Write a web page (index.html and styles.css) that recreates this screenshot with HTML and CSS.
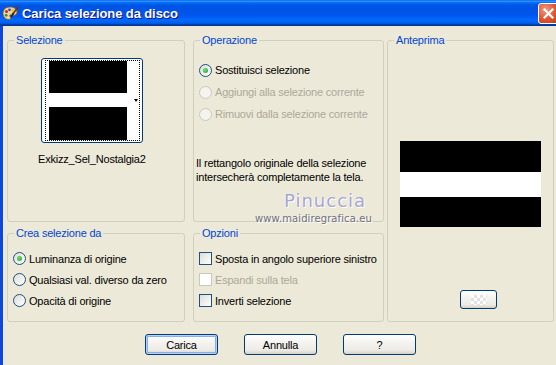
FILE: index.html
```html
<!DOCTYPE html>
<html lang="it">
<head>
  <meta charset="UTF-8" />
  <title>Carica selezione da disco</title>
  <link rel="stylesheet" href="styles.css">
</head>
<body>
  <div class="window">
    <div class="titlebar">
      <svg class="app-icon" width="17" height="17" viewBox="0 0 17 17">
        <path d="M8 2 C3 2 1 5 1 8.5 C1 12 3.5 14.5 7 14.5 C9 14.5 9 12.5 8 11.5 C7.2 10.6 8 9.5 9.5 10 C12 11 15 10 15 7 C15 4 12 2 8 2 Z" fill="#f0d49a" stroke="#7a5a2a" stroke-width="0.8"/>
        <circle cx="4.5" cy="6.5" r="1.5" fill="#e02020"/>
        <circle cx="7.5" cy="4.8" r="1.4" fill="#2050e0"/>
        <circle cx="4.2" cy="10.3" r="1.4" fill="#20a030"/>
        <circle cx="11" cy="5.5" r="1.3" fill="#f0c000"/>
        <path d="M16 2 L11 9" stroke="#6a3a10" stroke-width="1.6" stroke-linecap="round"/>
        <path d="M11.2 8.6 L9.6 11.4" stroke="#303030" stroke-width="2" stroke-linecap="round"/>
      </svg>
      <span class="title">Carica selezione da disco</span>
      <span class="close">
        <svg width="13" height="13" viewBox="0 0 13 13">
          <path d="M2.5 2.5 L10.5 10.5 M10.5 2.5 L2.5 10.5" stroke="#fff" stroke-width="2.2" stroke-linecap="square"/>
        </svg>
      </span>
    </div>

    <div class="frame">
      <div class="groups">
        <div class="col col-left">
          <fieldset class="group group-top">
            <legend>Selezione</legend>
            <div class="thumb">
              <div class="thumb-focus">
                <div class="thumb-img">
                  <div class="band-black"></div>
                  <div class="band-white"></div>
                  <div class="band-black"></div>
                </div>
                <div class="thumb-arrow"><span class="tri"></span></div>
              </div>
            </div>
            <div class="thumb-name">Exkizz_Sel_Nostalgia2</div>
          </fieldset>

          <fieldset class="group group-bottom">
            <legend>Crea selezione da</legend>
            <div class="options">
              <label class="opt"><span class="radio checked"></span>Luminanza di origine</label>
              <label class="opt"><span class="radio"></span>Qualsiasi val. diverso da zero</label>
              <label class="opt"><span class="radio"></span>Opacità di origine</label>
            </div>
          </fieldset>
        </div>

        <div class="col col-mid">
          <fieldset class="group group-top">
            <legend>Operazione</legend>
            <div class="options options-op">
              <label class="opt"><span class="radio checked"></span>Sostituisci selezione</label>
              <label class="opt disabled"><span class="radio"></span>Aggiungi alla selezione corrente</label>
              <label class="opt disabled"><span class="radio"></span>Rimuovi dalla selezione corrente</label>
            </div>
            <p class="note">Il rettangolo originale della selezione intersecherà completamente la tela.</p>
          </fieldset>

          <fieldset class="group group-bottom">
            <legend>Opzioni</legend>
            <div class="options">
              <label class="opt"><span class="check"></span>Sposta in angolo superiore sinistro</label>
              <label class="opt disabled"><span class="check"></span>Espandi sulla tela</label>
              <label class="opt"><span class="check"></span>Inverti selezione</label>
            </div>
          </fieldset>
        </div>

        <div class="col col-right">
          <fieldset class="group group-full">
            <legend>Anteprima</legend>
            <div class="preview">
              <div class="band-black"></div>
              <div class="band-white"></div>
              <div class="band-black"></div>
            </div>
            <button class="btn btn-small"><span class="checker"></span></button>
          </fieldset>
        </div>
      </div>

      <div class="actions">
        <button class="btn btn-default">Carica</button>
        <button class="btn">Annulla</button>
        <button class="btn">?</button>
      </div>

      <div class="watermark">
        <div class="wm-name">Pinuccia</div>
        <div class="wm-site">www.maidiregrafica.eu</div>
      </div>
    </div>
  </div>
</body>
</html>
```

FILE: styles.css
```css
body {
  margin: 0;
  overflow: hidden;
  font-family: 'Liberation Sans', Arial, sans-serif;
  font-size: 11px;
  letter-spacing: -0.2px;
  color: #000;
}

.window {
  width: 562px;
  height: 365px;
  display: flex;
  flex-direction: column;
}

/* barra del titolo */
.titlebar {
  height: 26px;
  flex: none;
  display: flex;
  align-items: center;
  padding-left: 2px;
  background: linear-gradient(to bottom, #0058ee 0%, #3593ff 4%, #288eff 6%, #127dff 8%, #036ffc 10%, #0262ee 14%, #0057e5 20%, #0054e3 24%, #0055eb 56%, #005bf5 66%, #026afe 76%, #0062ef 86%, #0052d6 92%, #0040ab 94%, #003092 100%);
}

.app-icon {
  margin-right: 3px;
}

.title {
  flex: 1;
  color: #fff;
  font-weight: bold;
  font-size: 13px;
  letter-spacing: -0.1px;
  text-shadow: 1px 1px #0f1089;
  padding-top: 1px;
}

.close {
  width: 21px;
  height: 21px;
  margin-right: 3px;
  box-sizing: border-box;
  border: 1px solid #fff;
  border-radius: 3px;
  background: radial-gradient(circle at 35% 30%, #f19a7f, #e0532f 55%, #c33a16);
  display: flex;
  align-items: center;
  justify-content: center;
}

/* area client */
.frame {
  flex: 1;
  position: relative;
  background-color: #ece9d8;
  border-left: 3px solid #0b49de;
  padding: 8px 0 0 4px;
}

.groups {
  display: flex;
}

.col {
  display: flex;
  flex-direction: column;
  gap: 5px;
}

.col-left { width: 178px; }
.col-mid { width: 191px; margin-left: 8px; }
.col-right { width: 167px; margin-left: 3px; }

.group {
  margin: 0;
  padding: 0;
  min-width: 0;
  box-sizing: border-box;
  border: 1px solid #d0d0bf;
  border-radius: 3px;
}

.group legend {
  margin-left: 6px;
  padding: 0 2px;
  line-height: 13px;
  color: #0046d5;
}

.group-top { height: 188px; }
.group-bottom { height: 95px; }
.group-full { height: 288px; }

/* miniatura selezione */
.thumb {
  width: 102px;
  height: 85px;
  box-sizing: border-box;
  margin: 11px 0 0 33px;
  padding: 1px 2px 1px 3px;
  border: 1px solid #003c74;
  border-radius: 3px;
  background-color: #fff;
}

.thumb-focus {
  display: flex;
  height: 81px;
  box-sizing: border-box;
  border: 1px dotted #000;
  padding-left: 3px;
}

.thumb-img {
  width: 78px;
  display: flex;
  flex-direction: column;
}

.thumb-img .band-black:first-child { height: 32px; }
.thumb-img .band-white { height: 14px; }
.thumb-img .band-black:last-child { flex: 1; }

.band-black { background-color: #000; }
.band-white { background-color: #fff; }

.thumb-arrow {
  flex: 1;
  display: flex;
  align-items: center;
  justify-content: flex-end;
  padding-right: 1px;
}

.tri {
  width: 0;
  height: 0;
  border-left: 2px solid transparent;
  border-right: 2px solid transparent;
  border-top: 3px solid #000;
}

.thumb-name {
  margin: 10px 0 0 30px;
  line-height: 13px;
}

/* opzioni */
.options {
  padding-top: 8px;
}

.options-op {
  padding-top: 12px;
}

.opt {
  display: flex;
  align-items: center;
  height: 21px;
  padding-left: 5px;
}

.options-op .opt {
  height: 22px;
}

.opt.disabled {
  color: #aca899;
}

.radio {
  width: 13px;
  height: 13px;
  box-sizing: border-box;
  margin-right: 3px;
  border: 1px solid #1c5180;
  border-radius: 50%;
  background: linear-gradient(135deg, #dcdcd7, #fff);
  display: flex;
  align-items: center;
  justify-content: center;
}

.radio.checked::after {
  content: "";
  width: 5px;
  height: 5px;
  border-radius: 50%;
  background: radial-gradient(circle at 40% 40%, #6fe06f, #21a121);
}

.disabled .radio {
  border-color: #cac8bb;
  background: #f4f3ee;
}

.check {
  width: 13px;
  height: 13px;
  box-sizing: border-box;
  margin-right: 3px;
  border: 1px solid #1c5180;
  background: linear-gradient(135deg, #dcdcd7, #fff);
}

.disabled .check {
  border-color: #cac8bb;
  background: #fff;
}

.note {
  margin: 31px 0 0 2px;
  line-height: 14px;
  width: 180px;
}

/* anteprima */
.preview {
  width: 141px;
  height: 86px;
  margin: 94px 0 0 12px;
  display: flex;
  flex-direction: column;
}

.preview .band-black:first-child { height: 31px; }
.preview .band-white { height: 25px; }
.preview .band-black:last-child { flex: 1; }

/* pulsanti */
.btn {
  font-family: inherit;
  font-size: 11px;
  letter-spacing: -0.2px;
  width: 73px;
  height: 21px;
  padding: 0;
  border: 1px solid #003c74;
  border-radius: 3px;
  background: linear-gradient(to bottom, #fff 0%, #f4f3ee 40%, #ecebe6 80%, #d6d0c5 100%);
  color: #000;
}

.btn-default {
  box-shadow: inset 0 0 0 1px #b9d1fa, inset 0 0 0 2px #88adea;
}

.btn-small {
  width: 37px;
  height: 19px;
  margin: 63px 0 0 72px;
  display: flex;
  align-items: center;
  justify-content: center;
}

.checker {
  width: 16px;
  height: 10px;
  background-color: #fff;
  background-image: linear-gradient(45deg, #e2e2e2 25%, transparent 25%, transparent 75%, #e2e2e2 75%), linear-gradient(45deg, #e2e2e2 25%, transparent 25%, transparent 75%, #e2e2e2 75%);
  background-size: 6px 6px;
  background-position: 0 0, 3px 3px;
}

.actions {
  display: flex;
  gap: 26px;
  margin: 12px 0 0 138px;
}

/* filigrana */
.watermark {
  position: absolute;
  left: 0;
  top: 0;
  pointer-events: none;
}

.wm-name {
  position: absolute;
  left: 281px;
  top: 166px;
  font-family: 'DejaVu Sans', sans-serif;
  font-size: 18px;
  line-height: 18px;
  letter-spacing: 1px;
  color: #a6a6d0;
  text-shadow: 1px 1px #fff, -1px 0 #f6f4ec;
  white-space: nowrap;
}

.wm-site {
  position: absolute;
  left: 252px;
  top: 188px;
  font-family: 'DejaVu Sans', sans-serif;
  font-size: 10px;
  line-height: 10px;
  letter-spacing: 0.1px;
  color: #6e6e80;
  text-shadow: 1px 1px #fff;
  white-space: nowrap;
}
```
